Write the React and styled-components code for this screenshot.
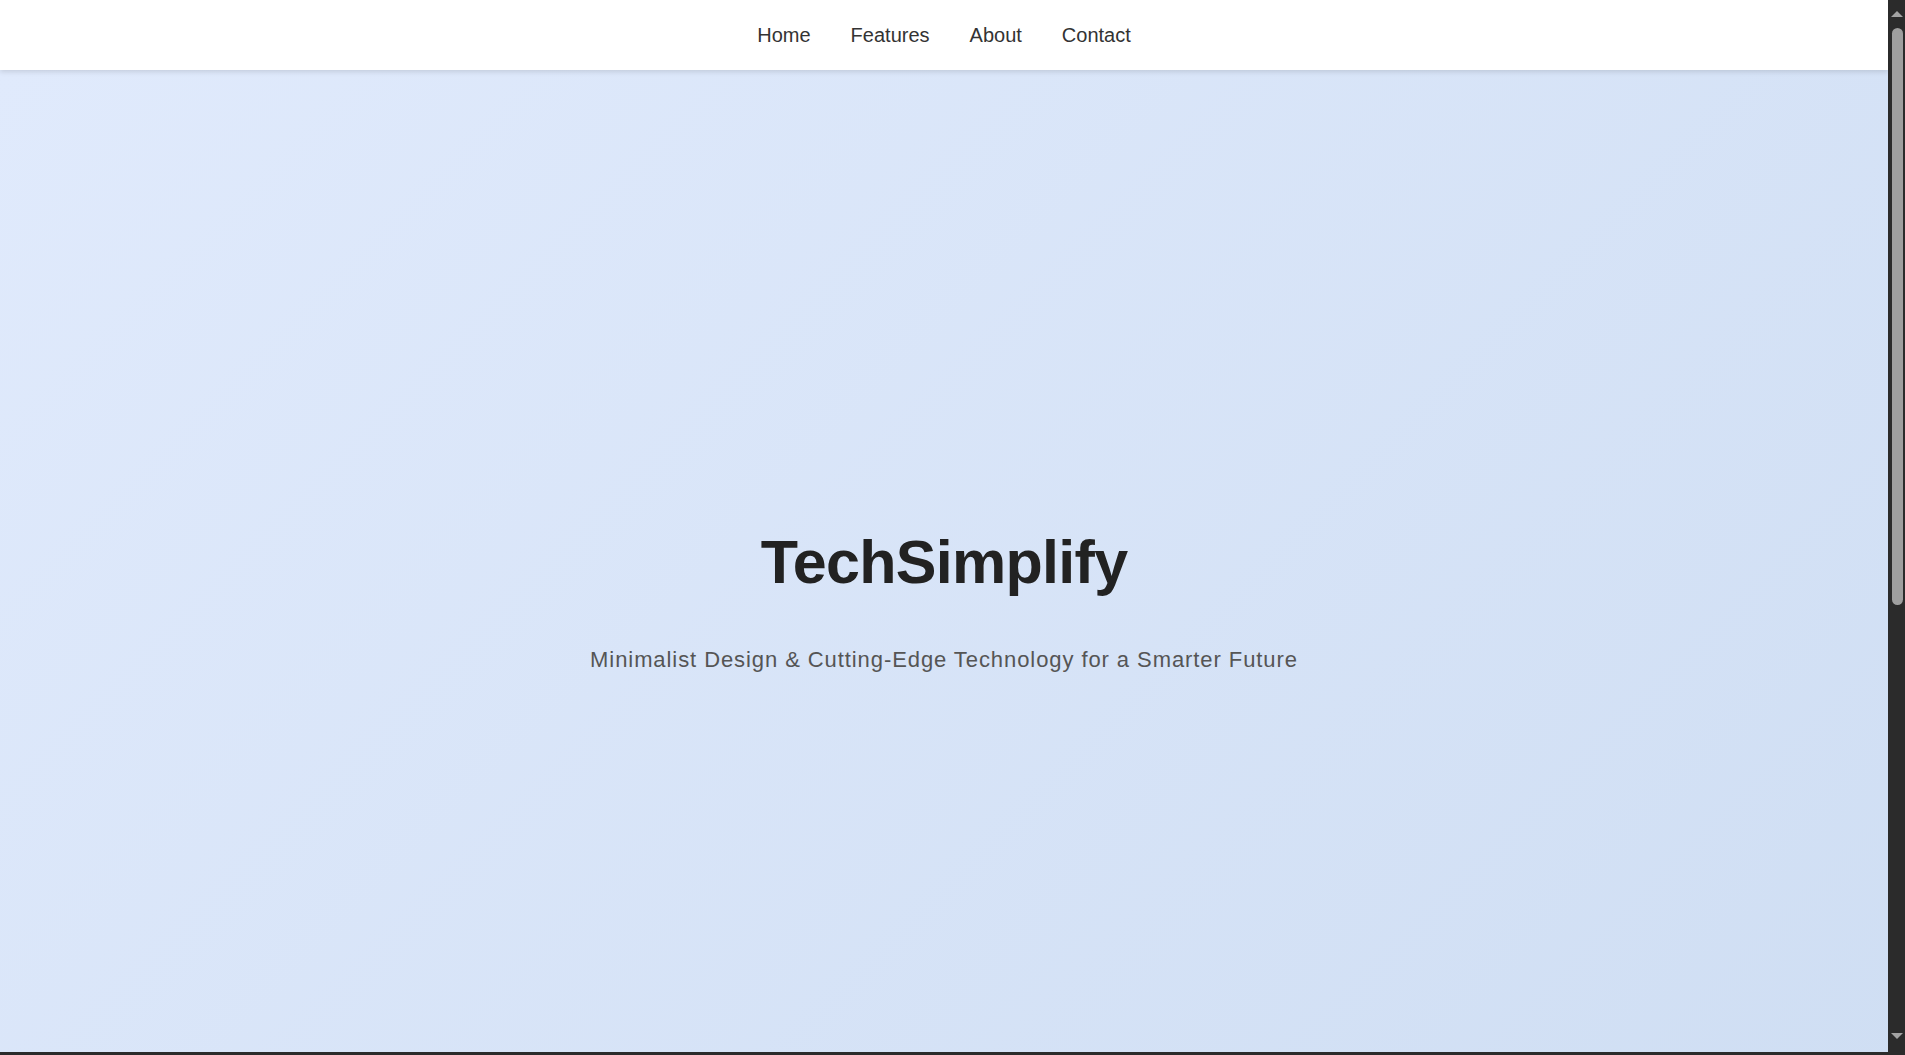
import React from 'react'
import styled, { createGlobalStyle } from 'styled-components'

const Global = createGlobalStyle`
  html, body { margin:0; padding:0; height:100%; overflow:hidden; }
  body { font-family: "Liberation Sans", Arial, sans-serif; color:#222; background:#2b2b2b; }
  * { box-sizing:border-box; }
`

const Frame = styled.div`
  height:calc(100vh - 3px); display:flex; overflow:hidden;
`
const Main = styled.main`
  flex:1; min-width:0; overflow:hidden; background:#cfdef3;
`
const Rail = styled.div`
  width:17px; flex:none; background:#2b2b2b; display:flex; flex-direction:column; align-items:center;
`
const RailButton = styled.div`
  height:22px; width:100%; display:flex; justify-content:center; padding-left:1px;
  align-items:${p => (p.$down ? 'flex-start' : 'flex-end')};
  padding-top:${p => (p.$down ? '3px' : '0')};
  padding-bottom:${p => (p.$down ? '0' : '5px')};
  &::after {
    content:''; width:0; height:0; border-left:6px solid transparent; border-right:6px solid transparent;
    ${p => (p.$down ? 'border-top:6px solid #a3a3a3;' : 'border-bottom:6px solid #a3a3a3;')}
  }
`
const Thumb = styled.div`
  width:11px; height:577px; margin:6px 0 0 2px; border-radius:6px; background:#9f9f9f;
`
const Spacer = styled.div`
  flex:1;
`
const Nav = styled.nav`
  height:70px; background:#fff; display:flex; align-items:center; justify-content:center; gap:40px;
  box-shadow:0 2px 5px rgba(0,0,0,0.12); position:relative; z-index:2;
`
const NavLink = styled.a`
  font-size:20px; color:#333; text-decoration:none;
`
const Hero = styled.section`
  min-height:100vh; display:flex; flex-direction:column; align-items:center; justify-content:center;
  background:linear-gradient(135deg, #e0eafc 0%, #cfdef3 100%); padding-top:4px; text-align:center;
`
const Title = styled.h1`
  margin:0 0 50px; font-size:61px; font-weight:700; letter-spacing:-0.7px; color:#222; line-height:normal;
`
const Subtitle = styled.p`
  margin:0; font-size:22px; letter-spacing:0.92px; color:#555; line-height:normal;
`

const links = ['Home', 'Features', 'About', 'Contact']

export default function App(){
  return (
    <Frame>
      <Global />
      <Main>
        <Nav>
          {links.map(l => <NavLink key={l} href={`#${l.toLowerCase()}`}>{l}</NavLink>)}
        </Nav>
        <Hero id="home">
          <Title>TechSimplify</Title>
          <Subtitle>Minimalist Design &amp; Cutting-Edge Technology for a Smarter Future</Subtitle>
        </Hero>
      </Main>
      <Rail>
        <RailButton />
        <Thumb />
        <Spacer />
        <RailButton $down />
      </Rail>
    </Frame>
  )
}
